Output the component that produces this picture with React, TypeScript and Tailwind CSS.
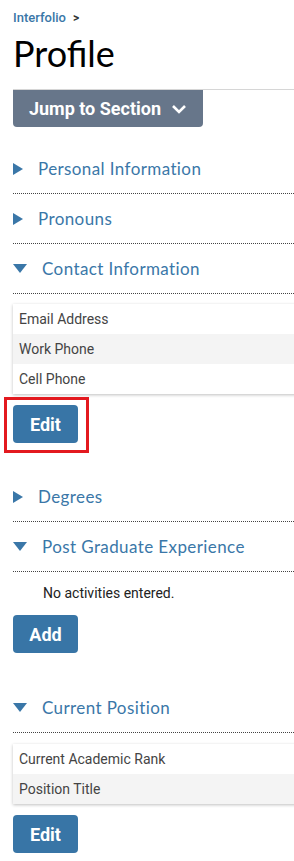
import { ReactNode } from 'react'

const heading = { fontFamily: 'Lato, "Open Sans", sans-serif' }
const body = { fontFamily: 'Roboto, "Liberation Sans", sans-serif' }

function SectionHeader({ title, open }: { title: string; open?: boolean }) {
  return (
    <div className="flex h-[50px] items-center border-b border-dotted border-[#444]">
      {open ? (
        <span className="mr-[15px] h-0 w-0 border-x-[7px] border-t-[9px] border-x-transparent border-t-[#3a77a8]" />
      ) : (
        <span className="mr-[15px] h-0 w-0 border-y-[6px] border-l-[10px] border-y-transparent border-l-[#3a77a8]" />
      )}
      <span className="text-[17px] tracking-[0.4px] text-[#3a77a8]" style={heading}>
        {title}
      </span>
    </div>
  )
}

function Button({ children }: { children: ReactNode }) {
  return (
    <button
      type="button"
      className="h-[38px] w-[65px] rounded bg-[#3875a6] text-[18px] font-bold text-white"
      style={body}
    >
      {children}
    </button>
  )
}

function FieldTable({ rows }: { rows: string[] }) {
  return (
    <div className="-mr-4 shadow-[0_1px_3px_rgba(0,0,0,0.25)]">
      {rows.map((r, i) => (
        <div
          key={r}
          className={`flex h-[30px] items-center px-[6px] text-[14px] text-[#444] ${i % 2 === 1 ? 'bg-[#f4f4f4]' : 'bg-white'}`}
          style={body}
        >
          {r}
        </div>
      ))}
    </div>
  )
}

export default function App() {
  return (
    <div className="min-h-[861px] w-[294px] overflow-hidden bg-white pl-[13px]">
      <div className="flex h-[26px] items-end gap-[7px] text-[13px] font-medium leading-[16px] text-[#3a77a8]" style={body}>
        Interfolio
        <span className="text-[12px] font-bold text-[#333]">&gt;</span>
      </div>
      <h1 className="mt-[4px] text-[36px] leading-[46px] text-black" style={heading}>
        Profile
      </h1>
      <div className="mt-[13px] border-t border-[#d6d6d6]">
        <button
          type="button"
          className="flex h-[37px] w-[190px] items-center justify-center gap-[10px] rounded-b bg-[#67768a] text-[18px] font-bold text-white"
          style={body}
        >
          Jump to Section
          <svg width="16" height="12" viewBox="0 0 16 12" fill="none">
            <path d="M2 3l6 6 6-6" stroke="white" strokeWidth="2.6" />
          </svg>
        </button>
      </div>

      <div className="mt-[17px]">
        <SectionHeader title="Personal Information" />
        <SectionHeader title="Pronouns" />
        <SectionHeader title="Contact Information" open />
      </div>
      <div className="mt-[10px]">
        <FieldTable rows={['Email Address', 'Work Phone', 'Cell Phone']} />
      </div>
      <div className="mt-[11px]">
        <div className="relative inline-block">
          <Button>Edit</Button>
          <span className="pointer-events-none absolute -bottom-[10px] -left-[9px] -right-[11px] -top-[8px] border-[3px] border-[#e3191f]" />
        </div>
      </div>

      <div className="mt-[29px]">
        <SectionHeader title="Degrees" />
        <SectionHeader title="Post Graduate Experience" open />
      </div>
      <p className="mt-[11px] pl-[30px] text-[14px] text-[#222]" style={body}>
        No activities entered.
      </p>
      <div className="mt-[11px]">
        <Button>Add</Button>
      </div>

      <div className="mt-[30px]">
        <SectionHeader title="Current Position" open />
      </div>
      <div className="mt-[11px]">
        <FieldTable rows={['Current Academic Rank', 'Position Title']} />
      </div>
      <div className="mt-[11px]">
        <Button>Edit</Button>
      </div>
    </div>
  )
}
